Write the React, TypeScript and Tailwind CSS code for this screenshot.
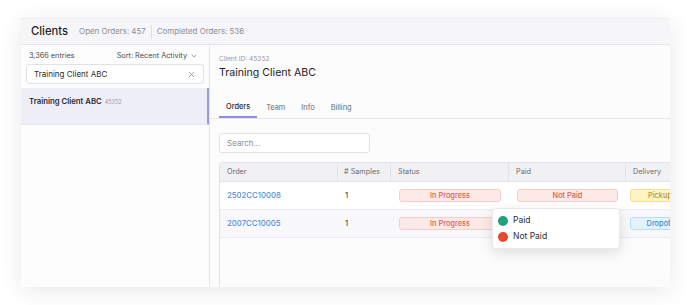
import { X, ChevronDown } from "lucide-react";

const font = { fontFamily: "Inter, 'Noto Sans', sans-serif" };

type Badge = { label: string; tone: "red" | "yellow" | "blue" };

const tones: Record<Badge["tone"], string> = {
  red: "bg-[#fdeae8] border-[#f8cdc7] text-[#e25b4d]",
  yellow: "bg-[#fdf4c4] border-[#f3df92] text-[#c0922c]",
  blue: "bg-[#e3f3fc] border-[#b9def3] text-[#3d8ecf]",
};

function Pill({ label, tone, className = "" }: Badge & { className?: string }) {
  return (
    <div
      className={`h-[13px] rounded-[3px] border flex items-center justify-center text-[7.4px] font-medium leading-none ${tones[tone]} ${className}`}
    >
      {label}
    </div>
  );
}

const rows = [
  { order: "2502CC10008", samples: "1", delivery: { label: "Pickup", tone: "yellow" as const }, bg: "bg-white" },
  { order: "2007CC10005", samples: "1", delivery: { label: "Dropoff", tone: "blue" as const }, bg: "bg-[#f8f8fa]" },
];

function OrdersTable() {
  return (
    <div className="relative mt-[9px] flex-1 border-l border-t border-[#e3e3e7] rounded-tl-[4px] overflow-hidden">
      <div className="w-[520px]">
        <div className="flex h-[19px] bg-[#f1f1f4] border-b border-[#e3e3e7] text-[7.25px] text-[#6b6b73] leading-none">
          <div className="w-[118px] pl-[7px] flex items-center border-r border-[#e3e3e7]">Order</div>
          <div className="w-[53px] pl-[6px] flex items-center border-r border-[#e3e3e7]"># Samples</div>
          <div className="w-[118px] pl-[7px] flex items-center border-r border-[#e3e3e7]">Status</div>
          <div className="w-[117px] pl-[7px] flex items-center border-r border-[#e3e3e7]">Paid</div>
          <div className="flex-1 pl-[7px] flex items-center">Delivery</div>
        </div>
        {rows.map((r, i) => (
          <div key={r.order} className={`flex h-[28px] items-center border-b border-[#ececef] ${r.bg}`}>
            <div className="w-[118px] pl-[7px] text-[7.75px] font-medium text-[#4a8fdf]">{r.order}</div>
            <div className="w-[53px] pl-[7px] text-[7.75px] text-[#2a2a2e]">{r.samples}</div>
            <div className="w-[118px] px-[8px]">
              <Pill label="In Progress" tone="red" />
            </div>
            <div className="w-[117px] px-[8px]">
              {i === 0 ? <Pill label="Not Paid" tone="red" /> : null}
            </div>
            <div className="flex-1 pl-[4px]">
              <Pill {...r.delivery} className="w-[60px]" />
            </div>
          </div>
        ))}
      </div>

      {/* paid dropdown */}
      <div className="absolute left-[272px] top-[45px] w-[128px] h-[41px] bg-white border border-[#e9e9ec] rounded-[4px] shadow-[0_4px_14px_rgba(0,0,0,0.12)] flex flex-col justify-center gap-[6px] pl-[5px]">
        <div className="flex items-center gap-[5px]">
          <span className="w-[10px] h-[10px] rounded-full bg-[#22a07d]" />
          <span className="text-[8.5px] text-[#2e2e33] leading-none">Paid</span>
        </div>
        <div className="flex items-center gap-[5px]">
          <span className="w-[10px] h-[10px] rounded-full bg-[#e8492d]" />
          <span className="text-[8.5px] text-[#2e2e33] leading-none">Not Paid</span>
        </div>
      </div>
    </div>
  );
}

export default function App() {
  return (
    <div className="w-[688px] h-[305px] bg-white pt-[18px] pl-[21px]" style={font}>
      <div className="w-[649px] h-[269px] bg-[#fcfcfd] flex flex-col overflow-hidden shadow-[0_4px_22px_rgba(0,0,0,0.09)] border-t border-[#efeff2]">
        {/* header */}
        <div className="h-[26px] shrink-0 bg-[#f6f6f8] border-b border-[#e6e6ea] flex items-center pl-[10px]">
          <span className="text-[11.25px] font-medium text-[#1e1e22]">Clients</span>
          <span className="ml-[11px] text-[7.9px] text-[#8d8d95]">Open Orders: 457</span>
          <span className="mx-[5px] w-px h-[14px] bg-[#e0e0e4]" />
          <span className="text-[7.9px] text-[#8d8d95]">Completed Orders: 536</span>
        </div>

        <div className="flex flex-1 min-h-0">
          {/* left list */}
          <div className="w-[189px] shrink-0 bg-[#fdfdfd] border-r border-[#e6e6ea] flex flex-col">
            <div className="flex items-center justify-between pl-[8px] pr-[11px] pt-[6px] h-[16px] text-[7.3px] text-[#4a4a50]">
              <span>3,366 entries</span>
              <span className="flex items-center gap-[3px]">
                Sort: Recent Activity
                <ChevronDown className="w-[8px] h-[8px] text-[#777]" strokeWidth={2} />
              </span>
            </div>
            <div className="mx-[5px] mt-[3px] h-[20px] rounded-[3px] border border-[#e2e2e6] bg-white flex items-center justify-between pl-[7px] pr-[7px]">
              <span className="text-[8px] text-[#2a2a2e]">Training Client ABC</span>
              <X className="w-[9px] h-[9px] text-[#7a7a80]" strokeWidth={1.75} />
            </div>
            <div className="mt-[4px] h-[37px] bg-[#eeeef9] border-r-2 border-[#9a9ae0] border-b border-b-[#e6e6ea] pl-[8px] pt-[8px] flex items-baseline leading-[10px]">
              <span className="text-[7.75px] font-semibold text-[#2a2a30]">Training Client ABC</span>
              <span className="ml-[3px] text-[5.5px] text-[#9a9aa2]">45352</span>
            </div>
          </div>

          {/* right detail */}
          <div className="flex-1 min-w-0 flex flex-col bg-[#fcfcfd]">
            <div className="pl-[9px] pt-[10px]">
              <div className="text-[6.6px] leading-[9px] text-[#9b9ba3]">Client ID: 45352</div>
              <div className="mt-[2px] text-[10.6px] leading-[14px] text-[#232328]">Training Client ABC</div>
            </div>
            <div className="mt-[18px] border-b border-[#e6e6ea] pl-[9px] flex gap-[2px]">
              <div className="px-[7px] h-[20px] flex items-center text-[7.4px] font-medium text-[#2a2a30] border-b-2 border-[#8d8de0] -mb-px">
                Orders
              </div>
              <div className="px-[7px] h-[20px] flex items-center text-[7.4px] text-[#6a6a72]">Team</div>
              <div className="px-[7px] h-[20px] flex items-center text-[7.4px] text-[#6a6a72]">Info</div>
              <div className="px-[7px] h-[20px] flex items-center text-[7.4px] text-[#6a6a72]">Billing</div>
            </div>
            <div className="pl-[9px] pt-[14px] flex-1 min-h-0 flex flex-col">
              <div className="w-[151px] h-[20px] rounded-[3px] border border-[#e2e2e6] bg-white flex items-center pl-[7px] text-[8px] text-[#8d8d95]">
                Search...
              </div>
              <OrdersTable />
            </div>
          </div>
        </div>
      </div>
    </div>
  );
}
